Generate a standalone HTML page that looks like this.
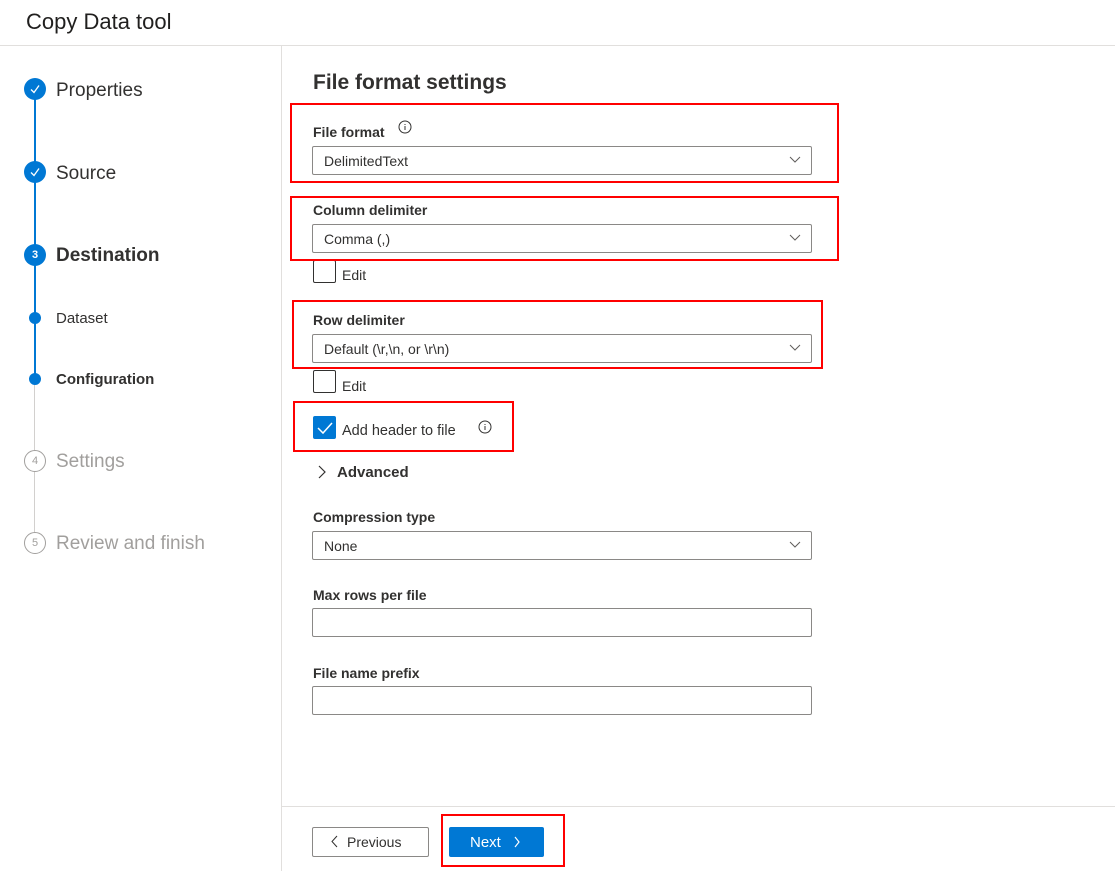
<!DOCTYPE html>
<html><head><meta charset="utf-8"><style>
*{margin:0;padding:0;box-sizing:border-box}
body{width:1115px;height:871px;background:#fff;font-family:"Segoe UI","Liberation Sans",sans-serif;color:#323130;position:relative;overflow:hidden}
.a{position:absolute}
.t{position:absolute;white-space:nowrap;line-height:1}
.lbl{font-size:14px;font-weight:bold;color:#323130}
.dd{position:absolute;left:312px;width:500px;height:29px;border:1px solid #8a8886;border-radius:2px;font-size:14px;padding-left:11px;line-height:29px}
.dd svg{position:absolute;right:10px;top:9px}
.cb{position:absolute;left:313px;width:23px;height:23px;border:1px solid #323130;border-radius:2px}
.red{position:absolute;border:2.5px solid #f00}
.circ{position:absolute;width:22px;height:22px;border-radius:50%;left:24px;background:#0078d4;color:#fff;font-size:11px;text-align:center;line-height:22px;font-weight:bold}
.circ.g{background:#fff;border:1px solid #a19f9d;color:#a19f9d;font-weight:normal;line-height:20px}
.step{font-size:19px;left:56px}
</style></head><body>
<div class="t" style="left:26px;top:11px;font-size:22px;color:#201f1e">Copy Data tool</div>
<div class="a" style="left:0;top:45px;width:1115px;height:1px;background:#e1dfdd"></div>
<div class="a" style="left:281px;top:45px;width:1px;height:826px;background:#e1dfdd"></div>
<div class="a" style="left:281px;top:806px;width:834px;height:1px;background:#e1dfdd"></div>

<div class="a" style="left:34px;top:89px;width:2px;height:290px;background:#0078d4"></div>
<div class="a" style="left:34px;top:379px;width:1px;height:164px;background:#d2d0ce"></div>
<div class="circ" style="top:78px"><svg width="22" height="22"><path d="M7 11.5l3 3 5-7" fill="none" stroke="#fff" stroke-width="1.3"/></svg></div>
<div class="t step" style="top:81px">Properties</div>
<div class="circ" style="top:161px"><svg width="22" height="22"><path d="M7 11.5l3 3 5-7" fill="none" stroke="#fff" stroke-width="1.3"/></svg></div>
<div class="t step" style="top:164px">Source</div>
<div class="circ" style="top:244px">3</div>
<div class="t step" style="top:246px;font-weight:bold">Destination</div>
<div class="a" style="left:29px;top:312px;width:12px;height:12px;border-radius:50%;background:#0078d4"></div>
<div class="t" style="left:56px;top:311px;font-size:15px">Dataset</div>
<div class="a" style="left:29px;top:373px;width:12px;height:12px;border-radius:50%;background:#0078d4"></div>
<div class="t" style="left:56px;top:372px;font-size:15px;font-weight:bold">Configuration</div>
<div class="circ g" style="top:450px">4</div>
<div class="t step" style="top:452px;color:#a19f9d">Settings</div>
<div class="circ g" style="top:532px">5</div>
<div class="t step" style="top:534px;color:#a19f9d">Review and finish</div>

<div class="t" style="left:313px;top:72px;font-size:21px;font-weight:bold;color:#323130">File format settings</div>

<div class="t lbl" style="left:313px;top:125px">File format</div>
<svg class="a" style="left:398px;top:120px" width="14" height="14"><circle cx="7" cy="7" r="6" fill="none" stroke="#323130"/><path d="M7 6v4M7 4v1" stroke="#323130"/></svg>
<div class="dd" style="top:146px">DelimitedText<svg width="12" height="8"><path d="M1 1l5 5 5-5" fill="none" stroke="#605e5c"/></svg></div>
<div class="t lbl" style="left:313px;top:203px">Column delimiter</div>
<div class="dd" style="top:224px">Comma (,)<svg width="12" height="8"><path d="M1 1l5 5 5-5" fill="none" stroke="#605e5c"/></svg></div>
<div class="cb" style="top:260px"></div>
<div class="t" style="left:342px;top:268px;font-size:14px">Edit</div>
<div class="t lbl" style="left:313px;top:313px">Row delimiter</div>
<div class="dd" style="top:334px">Default (\r,\n, or \r\n)<svg width="12" height="8"><path d="M1 1l5 5 5-5" fill="none" stroke="#605e5c"/></svg></div>
<div class="cb" style="top:370px"></div>
<div class="t" style="left:342px;top:379px;font-size:14px">Edit</div>
<div class="cb" style="top:416px;background:#0078d4;border-color:#0078d4"><svg width="21" height="21"><path d="M4 11l5 5 9-10" fill="none" stroke="#fff" stroke-width="1.5"/></svg></div>
<div class="t" style="left:342px;top:424px;font-size:14.5px">Add header to file</div>
<svg class="a" style="left:478px;top:420px" width="14" height="14"><circle cx="7" cy="7" r="6" fill="none" stroke="#323130"/><path d="M7 6v4M7 4v1" stroke="#323130"/></svg>
<svg class="a" style="left:317px;top:465px" width="10" height="14"><path d="M2 1l6 6-6 6" fill="none" stroke="#323130" stroke-width="1.2"/></svg>
<div class="t lbl" style="left:337px;top:465px;font-size:15px">Advanced</div>
<div class="t lbl" style="left:313px;top:510px">Compression type</div>
<div class="dd" style="top:531px">None<svg width="12" height="8"><path d="M1 1l5 5 5-5" fill="none" stroke="#605e5c"/></svg></div>
<div class="t lbl" style="left:313px;top:588px">Max rows per file</div>
<div class="dd" style="top:608px"></div>
<div class="t lbl" style="left:313px;top:666px">File name prefix</div>
<div class="dd" style="top:686px"></div>

<div class="a" style="left:312px;top:827px;width:117px;height:30px;border:1px solid #8a8886;border-radius:2px;font-size:14px;line-height:29px;padding-left:34px">Previous</div>
<svg class="a" style="left:331px;top:835px" width="8" height="13"><path d="M6 1l-5 5.5 5 5.5" fill="none" stroke="#323130"/></svg>
<div class="a" style="left:449px;top:827px;width:95px;height:30px;background:#0078d4;border-radius:2px;color:#fff;font-size:15px;line-height:31px;padding-left:21px">Next</div>
<svg class="a" style="left:513px;top:836px" width="8" height="12"><path d="M2 1l4 5-4 5" fill="none" stroke="#fff" stroke-width="1.2"/></svg>

<div class="red" style="left:290px;top:103px;width:549px;height:80px"></div>
<div class="red" style="left:290px;top:196px;width:549px;height:65px"></div>
<div class="red" style="left:292px;top:300px;width:531px;height:69px"></div>
<div class="red" style="left:293px;top:401px;width:221px;height:51px"></div>
<div class="red" style="left:441px;top:814px;width:124px;height:53px"></div>
</body></html>
